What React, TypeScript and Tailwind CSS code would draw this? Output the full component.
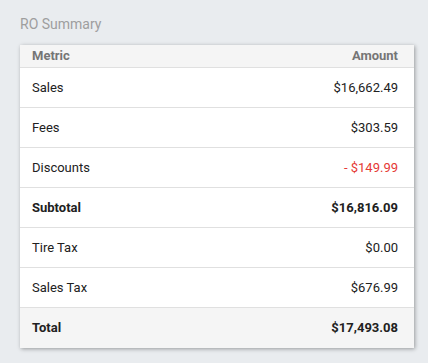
const rows = [
	{ label: "Sales", value: "$16,662.49" },
	{ label: "Fees", value: "$303.59" },
	{ label: "Discounts", value: "- $149.99", red: true },
	{ label: "Subtotal", value: "$16,816.09", bold: true },
	{ label: "Tire Tax", value: "$0.00" },
	{ label: "Sales Tax", value: "$676.99" },
];

export default function App() {
	return (
		<div className="min-h-[363px] w-[428px] bg-[#e9ecef] pl-5 pt-[14px] font-['Roboto',sans-serif]">
			<h2 className="text-[14px] leading-5 text-[#9e9e9e]">RO Summary</h2>
			<div className="mt-[11px] w-[394px] bg-white shadow-[1px_1px_4px_rgba(0,0,0,0.35)]">
				<div className="flex h-[23px] items-center justify-between border-b border-[#e0e0e0] bg-[#f5f5f5] pl-3 pr-4 text-[13px] font-bold text-[#757575]">
					<span>Metric</span>
					<span>Amount</span>
				</div>
				{rows.map((r) => (
					<div
						key={r.label}
						className={`flex h-10 items-center justify-between border-b border-[#e0e0e0] pl-3 pr-4 text-[13px] text-[#212121] ${r.bold ? "font-bold" : ""}`}
					>
						<span>{r.label}</span>
						<span className={r.red ? "text-[#e53935]" : ""}>{r.value}</span>
					</div>
				))}
				<div className="flex h-10 items-center justify-between bg-[#f5f5f5] pl-3 pr-4 text-[13px] font-bold text-[#212121]">
					<span>Total</span>
					<span>$17,493.08</span>
				</div>
			</div>
		</div>
	);
}
